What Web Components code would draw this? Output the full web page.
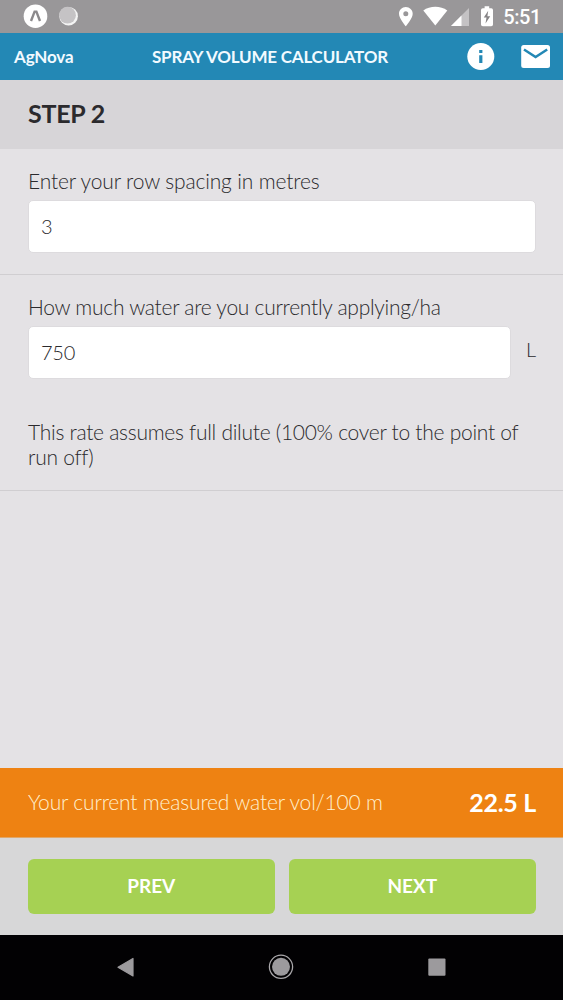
<!DOCTYPE html>
<html lang="en">
<head>
<meta charset="utf-8">
<title>Spray Volume Calculator</title>
<style>
    html, body{
        margin: 0;
        height: 100%;
    }
    body{
        font-family: Lato, "Open Sans", sans-serif;
        color: #2b2a2d;
        background: #e4e2e5;
    }
</style>
</head>
<body>

<template id="calculator-app">
    <style>
        :host{
            display: flex;
            flex-direction: column;
            width: 563px;
            height: 1000px;
            overflow: hidden;
            background: #e4e2e5;
        }
        main{
            flex: 1;
        }
    </style>
    <status-bar>5:51</status-bar>
    <app-header brand="AgNova">SPRAY VOLUME CALCULATOR</app-header>
    <step-title>STEP 2</step-title>
    <main>
        <form-section style="height: 126px">
            <number-field label="Enter your row spacing in metres" style="letter-spacing: -0.15px">3</number-field>
        </form-section>
        <form-section style="height: 216px">
            <number-field label="How much water are you currently applying/ha" unit="L">750</number-field>
            <p slot="note">This rate assumes full dilute (100% cover to the point of run off)</p>
        </form-section>
    </main>
    <result-bar label="Your current measured water vol/100 m">22.5 L</result-bar>
    <step-footer>
        <step-button>PREV</step-button>
        <step-button>NEXT</step-button>
    </step-footer>
    <android-nav></android-nav>
</template>

<template id="status-bar">
    <style>
        :host{
            display: flex;
            align-items: center;
            box-sizing: border-box;
            height: 33px;
            flex: none;
            padding: 0 22px 0 23px;
            background: #999799;
            color: #fff;
            font: 500 20px/33px Roboto, sans-serif;
        }
        svg{
            display: block;
            fill: #fff;
        }
        .space{
            flex: 1;
        }
        .time{
            margin-left: 8px;
            padding-top: 2px;
            letter-spacing: -0.4px;
        }
    </style>
    <svg width="64" height="33" viewBox="0 0 64 33">
        <circle cx="12.5" cy="16.2" r="11.8"/>
        <path d="M8 21L11.600 11.600H13.400L17 21" fill="none" stroke="#8b898b" stroke-width="2.400"/>
        <circle cx="45.600" cy="16.200" r="9.300" fill="#f4f4f4"/>
        <circle cx="44.500" cy="15.200" r="8.400" fill="#c5c3c5"/>
    </svg>
    <span class="space"></span>
    <svg width="98" height="33" viewBox="397 0 98 33">
        <path fill-rule="evenodd" d="M405.800 7C402 7 399 10 399 13.700C399 18.600 405.800 26.200 405.800 26.200S412.700 18.600 412.700 13.700C412.700 10 409.600 7 405.800 7ZM405.800 11.200A2.500 2.500 0 1 1 405.800 16.200A2.500 2.500 0 1 1 405.800 11.200Z"/>
        <path d="M435.300 25.500L423.300 10.500C430 5.600 440.600 5.600 447.300 10.500Z"/>
        <path d="M469 8V26H451Z" fill="#c4c2c4"/>
        <path d="M461.500 15.500V26H451Z"/>
        <path d="M484.600 6.200H489.200V8.300H491.200Q493 8.300 493 10V24.500Q493 26.200 491.200 26.200H482.800Q481 26.200 481 24.500V10Q481 8.300 482.800 8.300H484.600Z"/>
        <path d="M488.200 10.700L483.800 17.500H486.500L485.500 23.600L490.200 16.300H487.400Z" fill="#858385"/>
    </svg>
    <span class="time"><slot></slot></span>
</template>

<template id="app-header">
    <style>
        :host{
            display: grid;
            grid-template-columns: 138px 1fr 138px;
            align-items: center;
            flex: none;
            height: 47px;
            background: #2388b5;
            color: #f2faff;
            font-size: 17px;
            font-weight: 700;
            line-height: 46px;
            white-space: nowrap;
        }
        .brand{
            padding-left: 14px;
            letter-spacing: -0.15px;
        }
        .title{
            padding-left: 14px;
            letter-spacing: -0.2px;
        }
        svg{
            display: block;
            fill: #fff;
        }
    </style>
    <span class="brand"></span>
    <span class="title"><slot></slot></span>
    <svg width="138" height="47" viewBox="425 33 138 47">
        <circle cx="480.800" cy="56.500" r="13.500"/>
        <path d="M479.200 50H482.400V53H479.200ZM479.200 55.300H482.400V63H479.200Z" fill="#2388b5"/>
        <rect x="521.200" y="45" width="28.800" height="23" rx="2.500"/>
        <path d="M524 49.500L535.600 57L547.200 49.500" fill="none" stroke="#2388b5" stroke-width="2.500"/>
    </svg>
</template>

<template id="step-title">
    <style>
        :host{
            display: block;
            flex: none;
            height: 69px;
            padding-left: 28px;
            background: #d7d5d8;
            font-size: 25px;
            font-weight: 700;
            line-height: 67px;
            letter-spacing: -0.25px;
        }
    </style>
    <slot></slot>
</template>

<template id="form-section">
    <style>
        :host{
            display: block;
            box-sizing: border-box;
            padding: 19px 27.5px 0 28px;
            border-bottom: 1px solid #d0ced1;
            letter-spacing: -0.27px;
        }
        ::slotted(p){
            margin: 40px 0 0;
            font-size: 21px;
            font-weight: 300;
            line-height: 25px;
        }
    </style>
    <slot></slot>
    <slot name="note"></slot>
</template>

<template id="number-field">
    <style>
        :host{
            display: block;
            font-weight: 300;
        }
        label{
            display: block;
            font-size: 21px;
            line-height: 25px;
            white-space: nowrap;
        }
        .row{
            display: flex;
            margin-top: 7px;
        }
        .box{
            flex: 1;
            box-sizing: border-box;
            height: 53px;
            padding-left: 12px;
            border: 1px solid #dddbde;
            border-radius: 5px;
            background: #fff;
            font-size: 20px;
            line-height: 51px;
        }
        .unit{
            width: 9.5px;
            margin-left: 15px;
            font-size: 20px;
            line-height: 47px;
        }
        .unit:empty{
            display: none;
        }
    </style>
    <label></label>
    <div class="row">
        <div class="box"><slot></slot></div>
        <span class="unit"></span>
    </div>
</template>

<template id="result-bar">
    <style>
        :host{
            display: flex;
            justify-content: space-between;
            box-sizing: border-box;
            flex: none;
            height: 70px;
            padding: 0 27px 0 28px;
            border-bottom: 1px solid #e0a769;
            background: #ee8212;
            color: #fff;
            line-height: 69px;
        }
        .label{
            font-size: 21px;
            font-weight: 300;
            line-height: 68px;
            letter-spacing: -0.18px;
            color: #fff0cf;
        }
        .value{
            font-size: 25px;
            font-weight: 700;
            letter-spacing: -0.3px;
        }
    </style>
    <span class="label"></span>
    <span class="value"><slot></slot></span>
</template>

<template id="step-footer">
    <style>
        :host{
            display: grid;
            grid-template-columns: 1fr 1fr;
            gap: 13.5px;
            box-sizing: border-box;
            flex: none;
            height: 97px;
            padding: 21px 27px 21.5px 27.5px;
            background: #d7d7d8;
        }
    </style>
    <slot></slot>
</template>

<template id="step-button">
    <style>
        :host{
            display: block;
            border-radius: 6px;
            background: #a6d153;
            color: #fff;
            font-size: 19px;
            font-weight: 700;
            line-height: 54px;
            text-align: center;
        }
    </style>
    <slot></slot>
</template>

<template id="android-nav">
    <style>
        :host{
            display: block;
            flex: none;
            height: 65px;
            background: #020103;
        }
        svg{
            display: block;
        }
    </style>
    <svg width="563" height="65" viewBox="0 935 563 65" fill="#9c9a9d">
        <path d="M133 958.500V976L118 967.200Z" stroke="#9c9a9d" stroke-width="1.200" stroke-linejoin="round"/>
        <circle cx="281" cy="966.800" r="11.600" fill="none" stroke="#aaa8ab" stroke-width="1.300"/>
        <circle cx="281" cy="966.800" r="9"/>
        <rect x="428.300" y="958.500" width="17.200" height="17.300" rx="1"/>
    </svg>
</template>

<script type="text/javascript">
    class TemplateElement extends HTMLElement{

        constructor(){
            super();
            this.attachShadow({mode: 'open'});
            const template = document.getElementById(this.localName);
            this.shadowRoot.appendChild(template.content.cloneNode(true));
        }

        // copies an attribute into the matching node of the shadow root
        fill(selector, name){
            this.shadowRoot.querySelector(selector).textContent = this.getAttribute(name) || '';
        }

    }

    class AppHeader extends TemplateElement{

        connectedCallback(){
            this.fill('.brand', 'brand');
        }

    }

    class NumberField extends TemplateElement{

        connectedCallback(){
            this.fill('label', 'label');
            this.fill('.unit', 'unit');
        }

    }

    class ResultBar extends TemplateElement{

        connectedCallback(){
            this.fill('.label', 'label');
        }

    }

    window.customElements.define("app-header", AppHeader);
    window.customElements.define("number-field", NumberField);
    window.customElements.define("result-bar", ResultBar);
    window.customElements.define("status-bar", class extends TemplateElement{});
    window.customElements.define("step-title", class extends TemplateElement{});
    window.customElements.define("form-section", class extends TemplateElement{});
    window.customElements.define("step-footer", class extends TemplateElement{});
    window.customElements.define("step-button", class extends TemplateElement{});
    window.customElements.define("android-nav", class extends TemplateElement{});
    window.customElements.define("calculator-app", class extends TemplateElement{});
</script>

<calculator-app></calculator-app>

</body>
</html>
